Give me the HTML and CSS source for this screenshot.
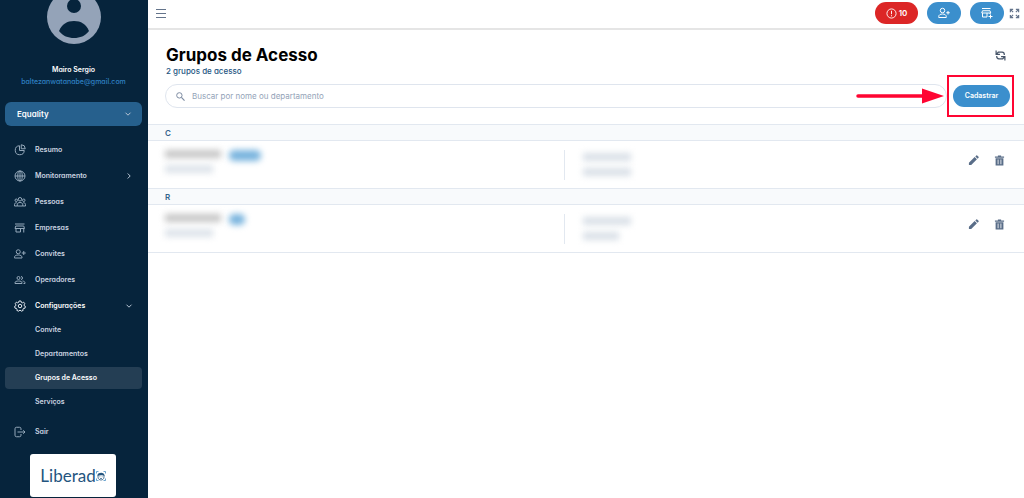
FILE: index.html
```html
<!DOCTYPE html>
<html lang="pt-BR">
<head>
<meta charset="utf-8">
<title>Grupos de Acesso</title>
<link rel="stylesheet" href="styles.css">
</head>
<body>
<div class="app">
  <aside class="sidebar">
    <div class="profile">
      <svg class="avatar" viewBox="0 0 54 54"><circle cx="27" cy="27" r="27" fill="#94a3b8"/><circle cx="27" cy="16" r="7" fill="#06243c"/><path d="M12 41C15 34 20 31 27 31s12 3 15 10c-4 5-9 7-15 7s-11-2-15-7z" fill="#06243c"/></svg>
      <div class="name">Mairo Sergio</div>
      <a class="email" href="#">baltezanwatanabe@gmail.com</a>
    </div>
    <button class="company" type="button"><span>Equality</span>
      <svg class="chev" viewBox="0 0 8 8"><path d="M1.500 2.700 4 5.200l2.500-2.500"/></svg></button>
    <nav class="nav">
      <a href="#" class="item"><svg class="icon" viewBox="0 0 24 24"><path d="M11 3.500A9 9 0 1 0 20.500 13H11z"/><path d="M14.500 1.500V9.500h8a8 8 0 0 0-8-8z"/></svg><span>Resumo</span></a>
      <a href="#" class="item"><svg class="icon" viewBox="0 0 24 24"><circle cx="12" cy="12" r="10"/><ellipse cx="12" cy="12" rx="4.500" ry="10"/><path d="M12 2v20M2 12h20"/></svg><span>Monitoramento</span><svg class="chev" viewBox="0 0 8 8"><path d="M2.700 1.500 5.200 4 2.700 6.500"/></svg></a>
      <a href="#" class="item"><svg class="icon" viewBox="0 0 24 24"><circle cx="12" cy="6.500" r="3.500"/><circle cx="4.500" cy="8.500" r="2.500"/><circle cx="19.500" cy="8.500" r="2.500"/><path d="M6.500 20v-2.500c0-3 2-4.500 5.500-4.500s5.500 1.500 5.500 4.500V20zM6.500 20H1v-3c0-2.200 1.500-3.500 4.500-3.500M17.500 20H23v-3c0-2.200-1.500-3.500-4.500-3.500"/></svg><span>Pessoas</span></a>
      <a href="#" class="item"><svg class="icon" viewBox="0 0 24 24"><path d="M2 4h19M3.500 8h16l1.500 5H2zM4 13v7h9v-7M19.500 13v8"/></svg><span>Empresas</span></a>
      <a href="#" class="item"><svg class="icon" viewBox="0 0 24 24"><circle cx="8.500" cy="7.500" r="4"/><path d="M1 20v-1.500C1 15.500 4 14 8.500 14s7.500 1.500 7.500 4.500V20zM19.500 6v8M15.500 10h8"/></svg><span>Convites</span></a>
      <a href="#" class="item"><svg class="icon" viewBox="0 0 24 24"><circle cx="9" cy="8" r="3"/><path d="M2 19v-1.500C2 15 5 14 9 14s7 1 7 3.500V19zM14 5a3 3 0 0 1 0 6M17 14c3 .5 5 1.500 5 3.500V19h-3"/></svg><span>Operadores</span></a>
      <a href="#" class="item open"><svg class="icon" viewBox="0 0 24 24"><path d="M10 2h4l.7 2.800 2 .9 2.600-1.400 2.300 3.100-1.500 2.300.3 1.800 2.400 1.200-.8 3.700-2.800.3-1.300 1.600.4 2.600-3.500 1.400L12 20.200l-2.800 2.100-3.500-1.400.4-2.600-1.300-1.600-2.800-.3-.8-3.700 2.400-1.200.3-1.800-1.500-2.300 2.300-3.100 2.600 1.400 2-.9z"/><circle cx="12" cy="12" r="3.500"/></svg><span>Configurações</span><svg class="chev" viewBox="0 0 8 8"><path d="M1.500 2.700 4 5.200l2.500-2.500"/></svg></a>
      <div class="subnav">
        <a href="#">Convite</a>
        <a href="#">Departamentos</a>
        <a href="#" class="active">Grupos de Acesso</a>
        <a href="#">Serviços</a>
      </div>
      <a href="#" class="item"><svg class="icon" viewBox="0 0 24 24"><path d="M14 8V5.500a3 3 0 0 0-3-3H5a3 3 0 0 0-3 3v13a3 3 0 0 0 3 3h6a3 3 0 0 0 3-3V16M7 12h15M18.500 8.500 22 12l-3.500 3.500"/></svg><span>Sair</span></a>
    </nav>
    <div class="logo"><span>Liberad</span><svg viewBox="0 0 20 20"><path d="M1 5V1h4M15 1h4v4M19 15v4h-4M5 19H1v-4" fill="none" stroke="#3b86bf" stroke-width="1.500"/><path d="M4 9v3c0 4 3 6 6 6s6-2 6-6V9" fill="none" stroke="#24557f" stroke-width="1.600"/><path d="M3 8c1-5 12-7 14 0v2c-3-2-10-2-14 0z" fill="#24557f"/><path d="M7 11.500h1.500M11.500 11.500H13M8 15h4" stroke="#24557f" stroke-width="1.400"/></svg></div>
  </aside>

  <div class="page">
    <header class="topbar">
      <button class="plain" type="button" aria-label="Menu"><svg class="menu" viewBox="0 0 10 10"><path d="M0 1.500h10M0 5.500h10M0 9.500h10" stroke="#64748b"/></svg></button>
      <div class="actions">
        <button class="pill alert" type="button"><svg viewBox="0 0 24 24"><circle cx="12" cy="12" r="10"/><path d="M12 6v7.500M12 15.800v2.400"/></svg><span>10</span></button>
        <button class="pill" type="button" aria-label="Adicionar pessoa"><svg viewBox="0 0 24 24"><circle cx="9" cy="7" r="4.500"/><path d="M1.500 21v-2c0-3 3-5 7.500-5s7.500 2 7.500 5v2zM20 8v7M16.500 11.500h7"/></svg></button>
        <button class="pill" type="button" aria-label="Adicionar empresa"><svg viewBox="0 0 24 24"><path d="M2 3h17M3 7.500h15l1.500 4.500h-18zM3 12v8h9v-8M18 12v2M19 15v8M15 19h8"/></svg></button>
        <button class="plain" type="button" aria-label="Tela cheia"><svg class="expand" viewBox="0 0 12 12" fill="none" stroke="#64748b" stroke-width="1.300"><path d="M1.500 4.500v-3h3M1.500 1.500l3 3M7.500 1.500h3v3M10.500 1.500l-3 3M10.500 7.500v3h-3M10.500 10.500l-3-3M4.500 10.500h-3v-3M1.500 10.500l3-3"/></svg></button>
      </div>
    </header>

    <main>
      <section class="heading">
        <div class="title-row">
          <div>
            <h1>Grupos de Acesso</h1>
            <p class="count">2 grupos de acesso</p>
          </div>
          <button class="plain" type="button" aria-label="Atualizar"><svg class="refresh" viewBox="0 0 20 20" fill="none" stroke="#475569" stroke-width="2.200"><path d="M2 1v7h7M2.500 7.500 6 4h7q4 0 4 5M18 19v-7h-7M17.500 12.500 14 16H7q-4 0-4-5"/></svg></button>
        </div>
        <div class="search-row">
          <label class="search">
            <svg viewBox="0 0 20 20" fill="none" stroke="#7c8ba1" stroke-width="2.200"><circle cx="7.500" cy="7.500" r="6"/><path d="m12 12 7 7" stroke-width="2.600"/></svg>
            <input type="text" aria-label="Buscar" placeholder="Buscar por nome ou departamento">
          </label>
          <div class="create">
            <button class="primary" type="button">Cadastrar</button>
            <div class="mark"></div>
            <svg class="arrow" viewBox="0 0 90 16"><path d="M3 8h66" stroke="#ff0532" stroke-width="3.500" stroke-linecap="round"/><path d="M67 .5 89 8l-22 7.500z" fill="#ff0532"/></svg>
          </div>
        </div>
      </section>

      <section class="list">
        <h2>C</h2>
        <article class="row">
          <div class="cell"><div class="line"><i class="smudge dark"></i><i class="smudge tag wide"></i></div><i class="smudge pale"></i></div>
          <div class="cell side"><i class="smudge slate"></i><i class="smudge slate"></i></div>
          <div class="tools">
            <button class="plain" type="button" aria-label="Editar"><svg viewBox="0 0 24 24"><path d="M2 22v-5L14.500 4.500l5 5L7 22zM16 3l2-2q1-1 2 0l3 3q1 1 0 2l-2 2z"/></svg></button>
            <button class="plain" type="button" aria-label="Excluir"><svg viewBox="0 0 24 24"><path fill-rule="evenodd" d="M2 3h6.500V1h7v2H22v3H2zM3.500 7h17v16h-17zM8 10v10h1.800V10zM14.200 10v10H16V10z"/></svg></button>
          </div>
        </article>
        <h2>R</h2>
        <article class="row">
          <div class="cell"><div class="line"><i class="smudge dark"></i><i class="smudge tag"></i></div><i class="smudge pale"></i></div>
          <div class="cell side"><i class="smudge slate"></i><i class="smudge slate short"></i></div>
          <div class="tools">
            <button class="plain" type="button" aria-label="Editar"><svg viewBox="0 0 24 24"><path d="M2 22v-5L14.500 4.500l5 5L7 22zM16 3l2-2q1-1 2 0l3 3q1 1 0 2l-2 2z"/></svg></button>
            <button class="plain" type="button" aria-label="Excluir"><svg viewBox="0 0 24 24"><path fill-rule="evenodd" d="M2 3h6.500V1h7v2H22v3H2zM3.500 7h17v16h-17zM8 10v10h1.800V10zM14.200 10v10H16V10z"/></svg></button>
          </div>
        </article>
      </section>
    </main>
  </div>
</div>
</body>
</html>
```
FILE: styles.css
```css
* { box-sizing: border-box; }
body { margin: 0; background: #fff; color: #1e293b; font: 8px/12px Inter, sans-serif; }
button, input { font: inherit; color: inherit; border: 0; padding: 0; background: none; }
a { color: inherit; text-decoration: none; }
svg { display: block; flex: none; }
h1, h2, p { margin: 0; }

.app { display: flex; height: 100vh; overflow: hidden; }

.sidebar { flex: none; width: 148px; padding: 0 6px 0 5px; overflow: hidden; background: #06243c; color: #cbd5e1; font-size: 7px; font-weight: 600; font-feature-settings: "cv11"; }
.profile { display: flex; flex-direction: column; align-items: center; margin-top: -10px; padding-bottom: 15px; }
.avatar { width: 54px; height: 54px; margin-bottom: 20px; }
.name { color: #fff; }
.email { line-height: 11px; font-weight: 500; color: #2f80c2; }
.company { display: flex; justify-content: space-between; align-items: center; width: 100%; height: 24px; padding: 0 10px 0 12px; border-radius: 6px; background: #26608d; color: #fff; font-size: 8px; font-weight: 600; }
.chev { width: 8px; height: 8px; fill: none; stroke: #b6c4d4; stroke-width: 1; }

.nav { margin-top: 11px; }
.item { display: flex; align-items: center; gap: 9px; height: 26px; padding: 0 9px; }
.item .chev { margin-left: auto; }
.icon { width: 12px; height: 12px; fill: none; stroke: #94a8ba; stroke-width: 2; }
.open { color: #fff; }
.open .icon { stroke: #e2e8f0; }
.subnav { display: flex; flex-direction: column; gap: 2px; padding-bottom: 6px; }
.subnav a { height: 22px; padding-left: 30px; line-height: 22px; border-radius: 4px; }
.subnav .active { background: #243e54; color: #fff; }
.logo { display: flex; justify-content: center; align-items: center; width: 86px; height: 43px; margin: 9px auto 0 25px; border-radius: 3px; background: #fff; color: #24557f; font: 17px/20px Lato, sans-serif; }
.logo svg { width: 10px; height: 10px; }

.page { flex: 1; min-width: 0; }
.topbar { display: flex; justify-content: space-between; align-items: center; height: 30px; padding: 0 4px 2px 8px; border-bottom: 2px solid #e5e5e5; }
.menu { width: 10px; height: 10px; }
.actions { display: flex; align-items: center; gap: 9px; }
.actions .plain { margin-left: -4px; }
.expand { width: 11px; height: 11px; }
.pill { display: flex; justify-content: center; align-items: center; gap: 2px; min-width: 34px; height: 22px; border-radius: 11px; background: #3b8fcd; color: #fff; font-weight: 600; }
.pill svg { width: 12px; height: 12px; fill: none; stroke: #fff; stroke-width: 2; }
.alert { min-width: 43px; background: #dc2626; }
.alert svg { width: 11px; height: 11px; }

.heading { padding: 15px 14px 16px 17px; }
.title-row { display: flex; justify-content: space-between; align-items: flex-start; padding: 0 4px 0 1px; }
.title-row .plain { margin-top: 5px; }
h1 { font-size: 17px; line-height: 21px; font-weight: 700; color: #000; }
.count { line-height: 10px; font-weight: 500; color: #24557f; font-feature-settings: "cv11"; }
.refresh { width: 11px; height: 11px; }
.search-row { display: flex; align-items: center; gap: 6px; margin-top: 8px; }
.search { flex: 1; display: flex; align-items: center; gap: 7px; height: 24px; padding: 0 10px; border: 1px solid #dfe5ee; border-radius: 12px; }
.search svg { width: 9px; height: 9px; }
.search input { flex: 1; min-width: 0; outline: 0; }
.search input::placeholder { color: #94a3b8; opacity: 1; }
.create { position: relative; }
.primary { display: block; width: 57px; height: 22px; border-radius: 11px; background: #3b8fcd; color: #fff; font-size: 7px; font-weight: 600; }
.mark { position: absolute; inset: -10px -4px -10px -6px; border: 2px solid #ff0532; }
.arrow { position: absolute; right: 65px; top: 3px; width: 90px; height: 16px; }

h2 { height: 17px; padding-left: 17px; border: 1px solid #e2e8f0; border-width: 1px 0; background: #f8fafc; color: #35648c; font-size: 8px; line-height: 16px; font-weight: 600; }
.row { display: grid; grid-template-columns: 1fr 1fr auto; height: 47px; padding: 9px 14px 8px 17px; }
.list { border-bottom: 1px solid #e2e8f0; }
.cell { display: flex; flex-direction: column; gap: 4px; }
.line { display: flex; gap: 8px; }
.side { gap: 7px; padding: 3px 0 0 18px; border-left: 1px solid #e2e8f0; }
.smudge { display: block; width: 48px; height: 8px; filter: blur(3px); background: #dde3ea; }
.dark { width: 56px; background: #c6c6c6; }
.tag { width: 16px; height: 11px; border-radius: 5px; background: #79b4de; }
.wide { width: 32px; }
.short { width: 36px; }
.slate { background: #d9e0e7; }
.tools { display: flex; align-items: center; gap: 15px; padding: 0 5px 10px; }
.tools svg { width: 11px; height: 11px; fill: #596d88; }
```
